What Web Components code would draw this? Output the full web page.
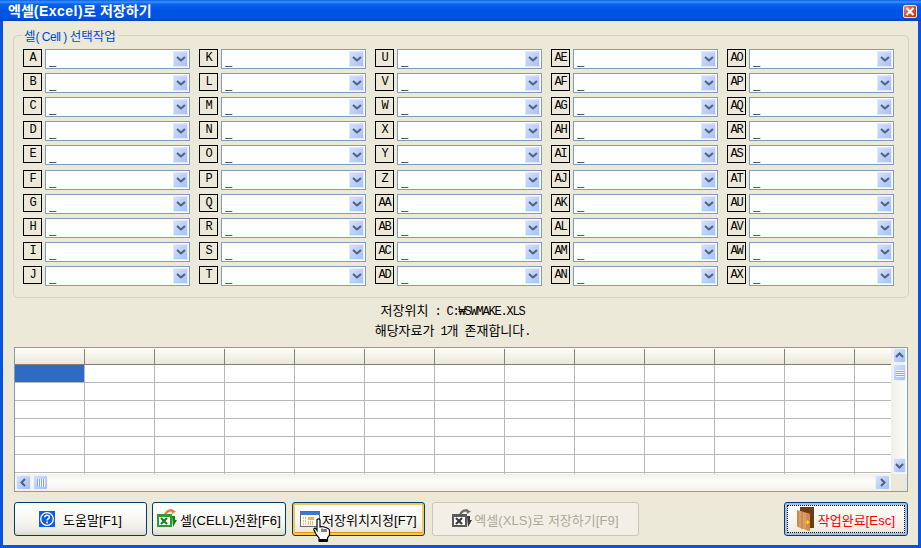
<!DOCTYPE html>
<html lang="ko"><head><meta charset="utf-8"><title>엑셀(Excel)로 저장하기</title>
<style>
html,body{margin:0;padding:0;width:921px;height:548px;overflow:hidden;background:#ece9d8}
</style></head><body>
<xp-window>
  <xp-group legend="셀( Cell ) 선택작업"></xp-group>
  <xp-status></xp-status>
  <xp-sheet></xp-sheet>
  <xp-toolbar></xp-toolbar>
</xp-window>
<script>
const HANGUL='"Noto Sans CJK KR","DejaVu Sans",sans-serif';
const mono=s=>s.replace(/[\x21-\x7e₩ ]+/g,m=>`<span class="m">${m}</span>`);
const MONO_CSS=`.m{font-family:"Liberation Mono",monospace;font-size:12px;letter-spacing:-1.2px;white-space:pre}`;
const BTN_CSS=`.m{font-family:"Liberation Sans",sans-serif;font-size:13px;letter-spacing:.15px;white-space:pre}`;
const BLUE='linear-gradient(135deg,#d6e2fc,#bccef8 55%,#a8bef1)';

class XpWindow extends HTMLElement{constructor(){super();this.attachShadow({mode:'open'}).innerHTML=`<style>
:host{display:flex;flex-direction:column;width:921px;height:548px;box-sizing:border-box;background:#ece9d8;font-family:${HANGUL};font-size:13px;color:#000;overflow:hidden}
.title{flex:none;height:21px;display:flex;align-items:center;justify-content:space-between;padding:0 4px 0 8px;box-sizing:border-box;
 background:linear-gradient(180deg,#0a5fe4 0,#3a93ff 2px,#0a63ee 4px,#0054e3 10px,#0055e5 17px,#0049c8 20px,#003dae 21px)}
.t{color:#fff;font-weight:700;font-size:14px;line-height:21px;white-space:pre}
.t span{font-family:"Liberation Sans",sans-serif;font-size:14px;letter-spacing:.5px}
.x{width:12px;height:11px;margin-top:1px;border:1px solid #f4e4dc;border-radius:2px;background:linear-gradient(135deg,#ea8d6f,#dd4a23 50%,#c23410);display:flex;align-items:center;justify-content:center}
.b{flex:1;min-height:0;display:flex;flex-direction:column;border:solid #0854e0;border-width:0 3px 3px 3px;padding:14px 10px 0 10px;box-sizing:border-box}
</style><div class="title"><div class="t">엑셀<span>(Excel)</span>로 저장하기</div>
<div class="x"><svg width="10" height="9" viewBox="0 0 10 9"><path d="M1.5 1 L8.5 8 M8.5 1 L1.5 8" stroke="#fff" stroke-width="2.2" fill="none"/></svg></div></div>
<div class="b"><slot></slot></div>`}}

class XpGroup extends HTMLElement{connectedCallback(){
 const cols=[['A','B','C','D','E','F','G','H','I','J'],['K','L','M','N','O','P','Q','R','S','T'],['U','V','W','X','Y','Z','AA','AB','AC','AD'],['AE','AF','AG','AH','AI','AJ','AK','AL','AM','AN'],['AO','AP','AQ','AR','AS','AT','AU','AV','AW','AX']];
 let h='';for(let r=0;r<10;r++)for(let c=0;c<5;c++){h+=`<xp-field label="${cols[c][r]}"></xp-field>`}
 this.attachShadow({mode:'open'}).innerHTML=`<style>
:host{display:block;position:relative;flex:none;height:263px;margin-right:-1px;box-sizing:border-box;border:1px solid #d5d2c2;border-radius:5px;padding:13px 0 0 9px}
.l{position:absolute;left:8px;top:-9px;background:#ece9d8;padding:0 2px;color:#0046d5;font-size:12.5px;line-height:18px;white-space:pre}
.l span{font-family:"Liberation Sans",sans-serif;font-size:12px;letter-spacing:-.5px}
.g{display:grid;grid-template-columns:repeat(5,167px);column-gap:9px;grid-template-rows:repeat(10,20px);row-gap:4.11px}
</style><div class="l">셀<span>( Cell ) </span>선택작업</div><div class="g">${h}</div>`}}

class XpField extends HTMLElement{connectedCallback(){
 this.attachShadow({mode:'open'}).innerHTML=`<style>
${MONO_CSS}
:host{display:flex;gap:3px;height:20px}
.lb{width:17px;height:16px;border:1px solid #000;background:#ece9d8;display:flex;align-items:center;justify-content:center;line-height:16px;flex:none}
.cb{width:143px;height:18px;border:1px solid #7f9db9;background:#fff;display:flex;justify-content:space-between}
.v{padding-left:3px;line-height:19px}
.bt{width:15px;height:16px;margin:1px 1px 0 0;border-radius:1px;background:${BLUE};display:flex;align-items:center;justify-content:center;box-shadow:inset 0 0 0 1px #e3ebfc}
</style><div class="lb"><span class="m">${this.getAttribute('label')}</span></div>
<div class="cb"><div class="v"><span class="m">_</span></div><div class="bt"><svg width="10" height="6" viewBox="0 0 10 6"><path d="M1 1 L5 4.5 L9 1" stroke="#4d6185" stroke-width="2" fill="none"/></svg></div></div>`}}

class XpStatus extends HTMLElement{connectedCallback(){
 this.attachShadow({mode:'open'}).innerHTML=`<style>${MONO_CSS}
:host{display:block;flex:none;height:49px;padding:2px 16px 0 0;box-sizing:border-box;text-align:center;font-size:13px;white-space:pre}
div{height:20px;line-height:20px;overflow:visible}
</style><div>${mono('저장위치 : C:₩SWMAKE.XLS')}</div><div>${mono('해당자료가 1개 존재합니다.')}</div>`}}

class XpSheet extends HTMLElement{connectedCallback(){
 const cols=13;let hd='',rows='';
 for(let i=0;i<cols;i++)hd+='<i></i>';
 for(let r=0;r<7;r++){rows+='<div class="r">';for(let i=0;i<cols;i++)rows+=`<b class="${r==0&&i==0?'sel':''}"></b>`;rows+='</div>'}
 const sb=(cls,d)=>`<div class="sbtn ${cls}"><svg width="9" height="9" viewBox="0 0 9 9"><path d="${d}" stroke="#4d6185" stroke-width="2" fill="none"/></svg></div>`;
 this.attachShadow({mode:'open'}).innerHTML=`<style>
:host{display:block;position:relative;flex:none;width:894px;height:145px;margin-left:1px;box-sizing:border-box;border:1px solid #7f9db9;background:#fff;overflow:hidden}
.h{display:flex;height:17px;box-sizing:border-box;padding-top:1px;border-bottom:1px solid #807d74;background:linear-gradient(180deg,#fff,#f6f4ea 45%,#ebe8d8)}
.h i{flex:none;width:70px;box-sizing:border-box;border-right:1px solid #85837a}
.r{display:flex;height:18px;box-sizing:border-box;border-bottom:1px solid #b8b8b8}
.r b{flex:none;width:70px;box-sizing:border-box;border-right:1px solid #b8b8b8}
.r b.sel{background:#316ac5}
.t{position:absolute;left:0;top:0;width:876px;height:126px;overflow:hidden}
.vs{position:absolute;right:0;top:0;width:16px;height:126px;background:linear-gradient(90deg,#f0efe8,#fdfdfa)}
.hs{position:absolute;left:0;bottom:0;height:17px;width:876px;background:linear-gradient(180deg,#f1f0e8,#fdfdf9 40%,#f4f2ea)}
.cn{position:absolute;right:0;bottom:0;width:16px;height:17px;background:#ece9d8}
.sbtn,.th{position:absolute;box-sizing:border-box;border-radius:2px;background:${BLUE};border:1px solid #eaf0fe;display:flex;align-items:center;justify-content:center}
.up{left:2px;top:0;width:13px;height:15px}.tv{left:2px;top:16px;width:13px;height:17px}
.dn{left:2px;bottom:1px;width:13px;height:15px}
.lf{left:1px;top:1px;width:15px;height:15px}.th2{left:18px;top:1px;width:15px;height:15px}
.rt{right:1px;top:1px;width:15px;height:15px}
</style>
<div class="t"><div class="h">${hd}</div>${rows}</div>
<div class="vs">${sb('up','M1 6 L4.5 2.5 L8 6')}<div class="th tv"><svg width="8" height="8" viewBox="0 0 8 8"><path d="M0 1.5H8M0 3.5H8M0 5.5H8M0 7.5H8" stroke="#eef3fe"/><path d="M0 2.5H8M0 4.5H8M0 6.5H8" stroke="#8ea8e4"/></svg></div>${sb('dn','M1 3 L4.5 6.5 L8 3')}</div>
<div class="hs">${sb('lf','M6 1 L2.5 4.5 L6 8')}<div class="th th2"><svg width="8" height="8" viewBox="0 0 8 8"><path d="M1.5 0V8M3.5 0V8M5.5 0V8M7.5 0V8" stroke="#eef3fe"/><path d="M.5 0V8M2.5 0V8M4.5 0V8M6.5 0V8" stroke="#8ea8e4"/></svg></div>${sb('rt','M3 1 L6.5 4.5 L3 8')}</div>
<div class="cn"></div>`}}

class XpButton extends HTMLElement{connectedCallback(){
 this.attachShadow({mode:'open'}).innerHTML=`<style>${BTN_CSS}
:host{display:block;position:relative;box-sizing:border-box;height:34px;flex:none;border:1px solid #003c74;border-radius:3px;background:linear-gradient(180deg,#fff,#f8f7f2 50%,#ecebe3 85%,#dcd8c9);font-size:13px}
:host([kind=focus]){box-shadow:inset 0 0 0 2px #f6c858,inset 0 -1px 0 2px #e59700}
:host([kind=dis]){border-color:#c9c7ba;background:#f2f0e6;color:#aca899}
:host([kind=def]){box-shadow:inset 0 0 0 2px #a7bde8;color:#f00}
.w{height:100%;display:flex;align-items:center;justify-content:center;white-space:pre;gap:var(--g,2px);box-sizing:border-box}
:host([kind=def]) .w{outline:1px dotted #000;outline-offset:-3px}
.ic{display:flex;flex:none}
</style><div class="w"><span class="ic"><slot></slot></span><span>${mono(this.getAttribute('text'))}</span></div>`}}

class XpToolbar extends HTMLElement{connectedCallback(){
 const door=`<svg width="17" height="26" viewBox="0 0 17 26"><rect x="3" y="1" width="14" height="21" fill="#6e3c12"/><path d="M0 4 L10 7 L13 8 V25 L3 22 L0 20Z" fill="#dd9c62"/><path d="M0 4V20L2 21.5V5ZM4 5.5V22.5L6 23V6Z" fill="#c98a55"/><path d="M9 7 L13 8 V25 L9 24Z" fill="#cf8a4c"/><path d="M10.5 14.5V18M8.7 16.2H12.3" stroke="#ffe000" stroke-width="1.4"/></svg>`;
 const xl=(c1,c2,c3)=>`<svg width="20" height="20" viewBox="0 0 20 20"><path d="M8 6 Q10 1 15 1.5 L16.5 3" fill="none" stroke="${c3}" stroke-width="2.2"/><path d="M14 0 L19 2.5 L15 5Z" fill="${c3}" opacity=".9"/><rect x="0" y="5" width="15" height="13" fill="${c1}"/><rect x="2" y="8" width="11" height="8" fill="#fff"/><path d="M4 9 L10 15 M10 9 L4 15" stroke="${c2}" stroke-width="2.2"/><path d="M15 7 H18 V11 H20 L16 18Z" fill="${c2}"/></svg>`;
 this.attachShadow({mode:'open'}).innerHTML=`<style>
:host{display:flex;flex:none;height:34px;margin:10px 0 0 1px}
xp-button svg{display:block}
.hand{position:absolute;left:20px;top:15px;display:block}
</style>
<xp-button style="width:133px;--g:8px" text="도움말[F1]"><svg width="16" height="16" viewBox="0 0 16 16"><rect width="16" height="16" fill="#0a5ce0"/><circle cx="8" cy="8" r="6.3" fill="none" stroke="#fff" stroke-width="1.3"/><path d="M5.8 6.2 C5.8 3.6 10.4 3.6 10.4 6.2 C10.4 8 8 7.8 8 9.6" fill="none" stroke="#fff" stroke-width="1.5"/><rect x="7.2" y="10.6" width="1.7" height="1.7" fill="#fff"/></svg></xp-button>
<xp-button style="width:134px;margin-left:5px;--g:3px" text="셀(CELL)전환[F6]">${xl('#2f9a34','#1f7a24','#e8783a')}</xp-button>
<xp-button kind="focus" style="width:133px;margin-left:6px;--g:2px" text="저장위치지정[F7]"><svg width="20" height="16" viewBox="0 0 20 16"><rect x=".5" y=".5" width="19" height="15" fill="#fdfbf2" stroke="#6a6a6a"/><rect x="1" y="1" width="18" height="3" fill="#3d78d8"/><rect x="8" y="6" width="6" height="3" fill="#f1b52e"/><path d="M3 7H6M3 10H6M3 13H6M8 11H13M8 13H13" stroke="#c8792a" stroke-dasharray="1 1"/></svg><svg class="hand" width="18" height="24" viewBox="0 0 18 24"><path d="M4 2 C4 .5 7 .5 7 2 V9 L9 8.5 L11 9 L13 9.5 L15 10.5 C16.5 11 16.5 12 16.5 13 V17 L14.5 20 V23 H6 V20 L3 16 L1 12 C.5 10.5 2 9.5 3 11 L4 12.5Z" fill="#fff" stroke="#000" stroke-width="1.2"/><rect x="6" y="21" width="8.5" height="3" fill="#000"/><path d="M9 10.5V14M11 11V14M13 11V14" stroke="#000"/></svg></xp-button>
<xp-button kind="dis" style="width:207px;margin-left:7px;--g:2px" text="엑셀(XLS)로 저장하기[F9]">${xl('#5a5a5a','#3a3a3a','#6a6a6a')}</xp-button>
<xp-button kind="def" style="width:124px;margin-left:145px;--g:4px" text="작업완료[Esc]">${door}</xp-button>`}}

customElements.define('xp-window',XpWindow);
customElements.define('xp-field',XpField);
customElements.define('xp-group',XpGroup);
customElements.define('xp-status',XpStatus);
customElements.define('xp-sheet',XpSheet);
customElements.define('xp-button',XpButton);
customElements.define('xp-toolbar',XpToolbar);
</script>
</body></html>
